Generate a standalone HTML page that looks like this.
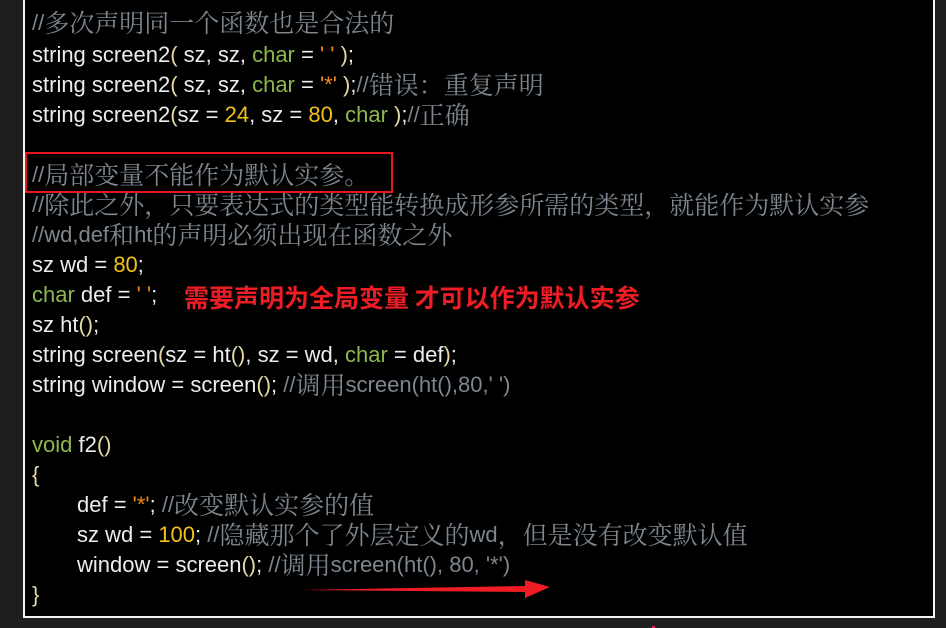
<!DOCTYPE html>
<html><head><meta charset="utf-8"><style>
body{margin:0;width:946px;height:628px;background:#1e1e1e;overflow:hidden;position:relative;font-family:"Liberation Sans","Noto Sans CJK SC",sans-serif}
#box{position:absolute;left:23px;top:-4px;width:908px;height:618px;border:2px solid #f4f4f4;background:#000}
.l{position:absolute;left:32px;font-size:22px;letter-spacing:0;color:#ececec;white-space:pre;line-height:26px;height:26px}
.i{left:77px}
.c{color:#7d868e}
.z{font-family:"Noto Serif CJK SC","Liberation Serif",serif;font-size:25px;letter-spacing:0;line-height:0;position:relative;top:2px}
.k{color:#8cb84e}.n{color:#f2c21a}.s{color:#ef8a1a}.p{color:#e4d9a4}
</style></head><body>
<div id="box"></div>
<div class="l" style="top:10px"><span class="c">//<span class="z">多次声明同一个函数也是合法的</span></span></div>
<div class="l" style="top:42px">string screen2<span class="p">(</span> sz, sz, <span class="k">char</span> = <span class="s">' '</span> <span class="p">)</span>;</div>
<div class="l" style="top:72px">string screen2<span class="p">(</span> sz, sz, <span class="k">char</span> = <span class="s">'*'</span> <span class="p">)</span>;<span class="c">//<span class="z">错误：重复声明</span></span></div>
<div class="l" style="top:102px">string screen2<span class="p">(</span>sz = <span class="n">24</span>, sz = <span class="n">80</span>, <span class="k">char</span> <span class="p">)</span>;<span class="c">//<span class="z">正确</span></span></div>
<div class="l" style="top:162px"><span class="c">//<span class="z">局部变量不能作为默认实参。</span></span></div>
<div style="position:absolute;left:25px;top:152px;width:364px;height:37px;border:2px solid #e8141e"></div>
<div class="l" style="top:192px"><span class="c">//<span class="z">除此之外，只要表达式的类型能转换成形参所需的类型，就能作为默认实参</span></span></div>
<div class="l" style="top:222px"><span class="c">//wd,def<span class="z">和</span>ht<span class="z">的声明必须出现在函数之外</span></span></div>
<div class="l" style="top:252px">sz wd = <span class="n">80</span>;</div>
<div class="l" style="top:282px"><span class="k">char</span> def = <span class="s">' '</span>;</div>
<div style="position:absolute;left:184px;top:283px;font-size:25px;font-weight:bold;color:#ee1c24;white-space:pre;font-family:'Noto Sans CJK SC',sans-serif;line-height:28px">需要声明为全局变量 才可以作为默认实参</div>
<div class="l" style="top:312px">sz ht<span class="p">()</span>;</div>
<div class="l" style="top:342px">string screen<span class="p">(</span>sz = ht<span class="p">()</span>, sz = wd, <span class="k">char</span> = def<span class="p">)</span>;</div>
<div class="l" style="top:372px">string window = screen<span class="p">()</span>; <span class="c">//<span class="z">调用</span>screen(ht(),80,' ')</span></div>
<div class="l" style="top:432px"><span class="k">void</span> f2<span class="p">()</span></div>
<div class="l p" style="top:462px">{</div>
<div class="l i" style="top:492px">def = <span class="s">'*'</span>; <span class="c">//<span class="z">改变默认实参的值</span></span></div>
<div class="l i" style="top:522px">sz wd = <span class="n">100</span>; <span class="c">//<span class="z">隐藏那个了外层定义的</span>wd<span class="z">，但是没有改变默认值</span></span></div>
<div class="l i" style="top:552px">window = screen<span class="p">()</span>; <span class="c">//<span class="z">调用</span>screen(ht(), 80, '*')</span></div>
<div class="l p" style="top:582px">}</div>
<svg style="position:absolute;left:0;top:0" width="946" height="628"><path d="M300 590 L525 586 L525 580 L550 587 L525 598 L525 592 Z" fill="#ee1c24"/><rect x="652" y="626" width="3" height="2" fill="#ff1060"/></svg>
</body></html>
